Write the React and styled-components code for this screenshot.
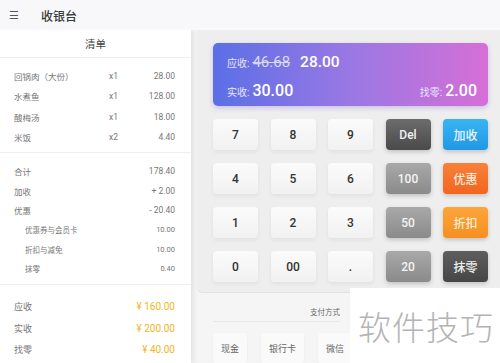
import React from "react";
import styled, { createGlobalStyle } from "styled-components";

const GlobalStyle = createGlobalStyle`
  html, body {
    margin: 0;
    padding: 0;
    background: #f3f3f4;
    font-family: "Roboto", "Noto Sans CJK SC", sans-serif;
  }
`;

const items = [
  { name: "回锅肉（大份）", qty: "x1", price: "28.00" },
  { name: "水煮鱼", qty: "x1", price: "128.00" },
  { name: "酸梅汤", qty: "x1", price: "18.00" },
  { name: "米饭", qty: "x2", price: "4.40" },
];

const totals = [
  { name: "合计", value: "178.40" },
  { name: "加收", value: "+ 2.00" },
  { name: "优惠", value: "- 20.40" },
  { name: "优惠券与会员卡", value: "10.00", sub: true },
  { name: "折扣与减免", value: "10.00", sub: true },
  { name: "抹零", value: "0.40", sub: true },
];

const payments = [
  { name: "应收", value: "¥ 160.00" },
  { name: "实收", value: "¥ 200.00" },
  { name: "找零", value: "¥ 40.00" },
];

const keys = [
  ["7", "num"], ["8", "num"], ["9", "num"], ["Del", "del"], ["加收", "blue"],
  ["4", "num"], ["5", "num"], ["6", "num"], ["100", "gray"], ["优惠", "red"],
  ["1", "num"], ["2", "num"], ["3", "num"], ["50", "gray"], ["折扣", "orange"],
  ["0", "num"], ["00", "num"], [".", "num"], ["20", "gray"], ["抹零", "dark"],
];

const keyColors = {
  num: { bg: "linear-gradient(#fbfbfb, #f1f1f1)", fg: "#333" },
  del: { bg: "linear-gradient(#6c6c6c, #4a4a4a)", fg: "#f2f2f2" },
  gray: { bg: "linear-gradient(#a9a9a9, #8a8a8a)", fg: "#f4f4f4" },
  blue: { bg: "linear-gradient(#38b4f4, #2298e4)", fg: "#eaf6ff" },
  red: { bg: "linear-gradient(#f7823a, #f2651f)", fg: "#ffe8da" },
  orange: { bg: "linear-gradient(#fba63a, #f78f22)", fg: "#fff0dc" },
  dark: { bg: "linear-gradient(#5e5e5e, #464646)", fg: "#eee" },
};

export default function App() {
  return (
    <>
      <GlobalStyle />
      <Screen>
        <TopBar>
          <Burger>☰</Burger>
          <Title>收银台</Title>
        </TopBar>
        <Body>
          <ListPanel>
            <ListHeader>清单</ListHeader>
            <Section>
              {items.map((it) => (
                <ItemRow key={it.name}>
                  <ItemName>{it.name}</ItemName>
                  <Qty>{it.qty}</Qty>
                  <Price>{it.price}</Price>
                </ItemRow>
              ))}
            </Section>
            <Section>
              {totals.map((t) => (
                <TotalRow key={t.name} $sub={t.sub}>
                  <span>{t.name}</span>
                  <span>{t.value}</span>
                </TotalRow>
              ))}
            </Section>
            <PaySection>
              {payments.map((p) => (
                <PayRow key={p.name}>
                  <span>{p.name}</span>
                  <PayValue>{p.value}</PayValue>
                </PayRow>
              ))}
            </PaySection>
          </ListPanel>
          <RightSide>
            <KeyPanel>
              <AmountCard>
                <CardRow>
                  <CardLabel>应收:</CardLabel>
                  <Struck>46.68</Struck>
                  <CardNum>28.00</CardNum>
                </CardRow>
                <CardRow>
                  <CardLabel>实收:</CardLabel>
                  <CardNum $big>30.00</CardNum>
                  <Spacer />
                  <CardLabel>找零:</CardLabel>
                  <CardNum $big>2.00</CardNum>
                </CardRow>
              </AmountCard>
              <KeyGrid>
                {keys.map(([label, kind]) => (
                  <Key key={label} $kind={kind}>
                    {label}
                  </Key>
                ))}
              </KeyGrid>
            </KeyPanel>
            <PayArea>
              <PayTitle>支付方式</PayTitle>
              <PayButtons>
                <PayButton>现金</PayButton>
                <PayButton>银行卡</PayButton>
                <PayButton>微信</PayButton>
              </PayButtons>
            </PayArea>
            <Watermark>软件技巧</Watermark>
          </RightSide>
        </Body>
      </Screen>
    </>
  );
}

const Screen = styled.div`
  width: 500px;
  height: 363px;
  display: flex;
  flex-direction: column;
  overflow: hidden;
`;

const TopBar = styled.div`
  height: 30px;
  flex: none;
  display: flex;
  align-items: center;
  background: #f8f8fa;
  color: #333;
  position: relative;
  z-index: 2;
`;

const Burger = styled.span`
  width: 14px;
  margin-left: 9px;
  font-size: 11px;
  color: #555;
`;

const Title = styled.span`
  margin-left: 18px;
  font-size: 12px;
  font-weight: 500;
  color: #3a3a3a;
`;

const Body = styled.div`
  flex: 1;
  display: flex;
  min-height: 0;
`;

const ListPanel = styled.div`
  width: 191px;
  flex: none;
  background: #fff;
  box-shadow: 2px 0 5px rgba(0, 0, 0, 0.08);
  display: flex;
  flex-direction: column;
  position: relative;
  z-index: 1;
`;

const ListHeader = styled.div`
  height: 27px;
  display: flex;
  align-items: center;
  justify-content: center;
  font-size: 10.5px;
  color: #444;
  border-bottom: 1px solid #eeeeee;
`;

const Section = styled.div`
  display: flex;
  flex-direction: column;
  padding: 8px 16px 5px 14px;
  border-bottom: 1px solid #eeeeee;
`;

const ItemRow = styled.div`
  height: 20.3px;
  display: flex;
  align-items: center;
  font-size: 8.5px;
  color: #777;
`;

const ItemName = styled.span`
  flex: 1;
`;

const Qty = styled.span`
  width: 30px;
`;

const Price = styled.span`
  width: 36px;
  text-align: right;
`;

const TotalRow = styled.div`
  height: 19.6px;
  display: flex;
  align-items: center;
  justify-content: space-between;
  font-size: ${(p) => (p.$sub ? "7.5px" : "8.5px")};
  padding-left: ${(p) => (p.$sub ? "11px" : "0")};
  color: #777;
`;

const PaySection = styled.div`
  display: flex;
  flex-direction: column;
  padding: 11px 16px 0 14px;
`;

const PayRow = styled.div`
  height: 21.5px;
  display: flex;
  align-items: center;
  justify-content: space-between;
  font-size: 9px;
  color: #777;
`;

const PayValue = styled.span`
  color: #f2b423;
  font-size: 10px;
`;

const RightSide = styled.div`
  flex: 1;
  display: flex;
  flex-direction: column;
  margin-left: 6px;
  position: relative;
`;

const KeyPanel = styled.div`
  background: #eeeeef;
  border-bottom-left-radius: 6px;
  border-bottom: 1px solid #e2e2e2;
  padding: 13px 0 9px 16px;
  display: flex;
  flex-direction: column;
  gap: 13px;
  height: 263px;
  box-sizing: border-box;
`;

const AmountCard = styled.div`
  width: 275px;
  height: 63px;
  box-sizing: border-box;
  border-radius: 5px;
  background: linear-gradient(90deg, #5b6fe6 0%, #9a78e4 50%, #d66fd6 100%);
  box-shadow: 0 2px 5px rgba(120, 90, 200, 0.3);
  padding: 10px 11px 0 14px;
  display: flex;
  flex-direction: column;
  gap: 3px;
  color: #fff;
`;

const CardRow = styled.div`
  display: flex;
  align-items: baseline;
  height: 25px;
`;

const CardLabel = styled.span`
  font-size: 10px;
  color: #e8e8ff;
  margin-right: 3px;
`;

const Struck = styled.span`
  font-size: 15px;
  color: #d8d8ff;
  text-decoration: line-through;
  margin-right: 10px;
`;

const CardNum = styled.span`
  font-size: ${(p) => (p.$big ? "16px" : "15.5px")};
  font-weight: 500;
  color: #fff;
`;

const Spacer = styled.span`
  flex: 1;
`;

const KeyGrid = styled.div`
  display: grid;
  grid-template-columns: repeat(5, 45px);
  grid-auto-rows: 31px;
  column-gap: 12.5px;
  row-gap: 13px;
`;

const Key = styled.div`
  display: flex;
  align-items: center;
  justify-content: center;
  border-radius: 4px;
  font-size: 12px;
  font-weight: 500;
  background: ${(p) => keyColors[p.$kind].bg};
  color: ${(p) => keyColors[p.$kind].fg};
  box-shadow: ${(p) =>
    p.$kind === "num"
      ? "0 2px 4px rgba(0, 0, 0, 0.06)"
      : "0 2px 4px rgba(0, 0, 0, 0.18)"};
`;

const PayArea = styled.div`
  flex: 1;
  background: #f5f5f6;
  padding: 13px 0 0 16px;
  display: flex;
  flex-direction: column;
`;

const PayTitle = styled.div`
  width: 127px;
  text-align: right;
  font-size: 7.5px;
  color: #666;
  padding-bottom: 4px;
  border-bottom: 1px solid #e8e8e8;
`;

const PayButtons = styled.div`
  display: flex;
  gap: 14px;
  margin-top: 11px;
`;

const PayButton = styled.div`
  height: 30px;
  padding: 0 8px;
  display: flex;
  align-items: center;
  background: #fafafa;
  border-radius: 3px;
  box-shadow: 0 1px 3px rgba(0, 0, 0, 0.05);
  font-size: 9px;
  color: #666;
`;

const Watermark = styled.div`
  position: absolute;
  left: 153px;
  top: 258px;
  right: 0;
  bottom: 0;
  background: #fff;
  display: flex;
  align-items: center;
  padding-left: 8px;
  font-family: "Noto Sans CJK SC", sans-serif;
  font-weight: 300;
  font-size: 33px;
  color: #b4b4b4;
  letter-spacing: 1px;
`;
